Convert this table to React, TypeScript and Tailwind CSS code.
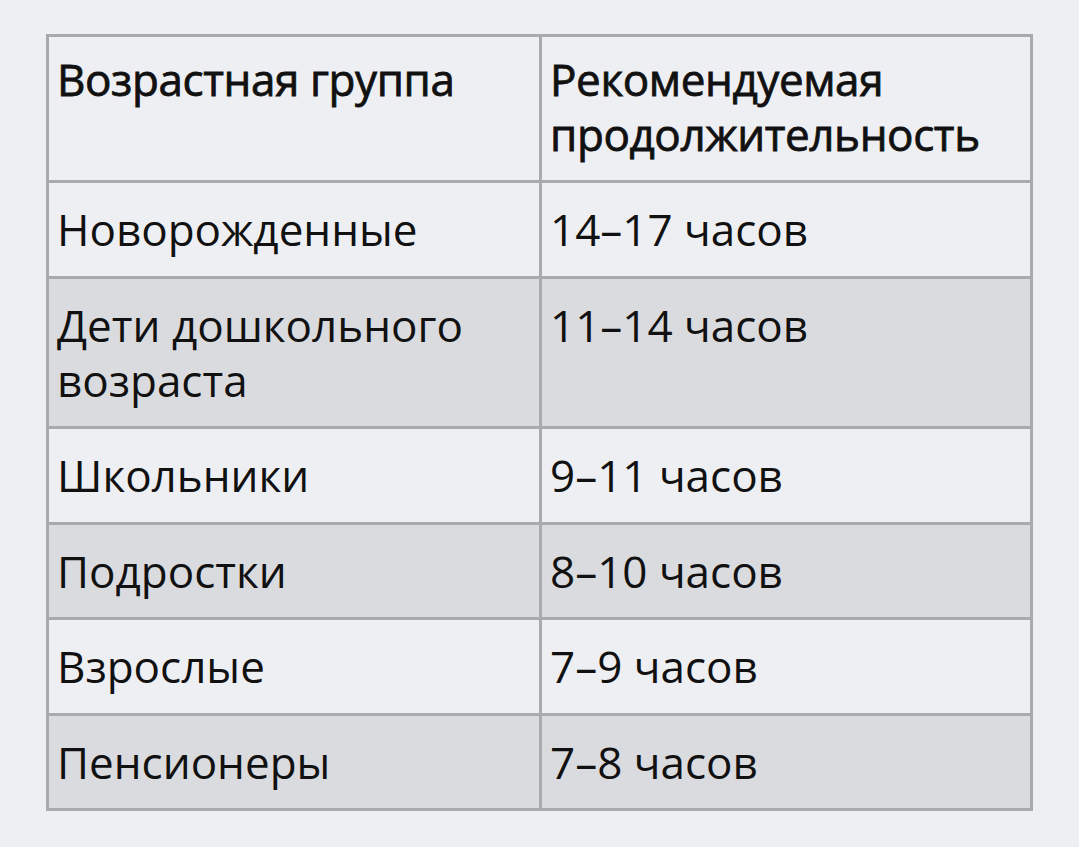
const rows: { group: string; hours: string; shaded: boolean }[] = [
  { group: "Новорожденные", hours: "14–17 часов", shaded: false },
  { group: "Дети дошкольного возраста", hours: "11–14 часов", shaded: true },
  { group: "Школьники", hours: "9–11 часов", shaded: false },
  { group: "Подростки", hours: "8–10 часов", shaded: true },
  { group: "Взрослые", hours: "7–9 часов", shaded: false },
  { group: "Пенсионеры", hours: "7–8 часов", shaded: true },
];

export default function App() {
  return (
    <div
      className="min-h-[847px] bg-[#eeeff3] pt-[34px] pl-[46px]"
      style={{ fontFamily: '"Open Sans", "Noto Sans", sans-serif' }}
    >
      <table className="w-[987px] border-collapse border-[3px] border-[#a6a7ab] text-[44px] leading-[55px] text-[#111]">
        <thead>
          <tr>
            <th className="w-[493px] border-[3px] border-[#a9aaae] pl-[8px] pr-[8px] pt-[15px] pb-[18px] text-left align-top font-normal tracking-[-0.4px] [-webkit-text-stroke:0.8px_#111]">
              Возрастная группа
            </th>
            <th className="border-[3px] border-[#a9aaae] pl-[8px] pr-[8px] pt-[15px] pb-[18px] text-left align-top font-normal tracking-[-0.4px] [-webkit-text-stroke:0.8px_#111]">
              Рекомендуемая продолжительность
            </th>
          </tr>
        </thead>
        <tbody>
          {rows.map((r) => (
            <tr key={r.group} className={r.shaded ? "bg-[#dadbdf]" : ""}>
              <td className="border-[3px] border-[#a9aaae] pl-[8px] pr-[8px] pt-[19px] pb-[18.5px] align-top">
                {r.group}
              </td>
              <td className="border-[3px] border-[#a9aaae] pl-[8px] pr-[8px] pt-[19px] pb-[18.5px] align-top">
                {r.hours}
              </td>
            </tr>
          ))}
        </tbody>
      </table>
    </div>
  );
}
